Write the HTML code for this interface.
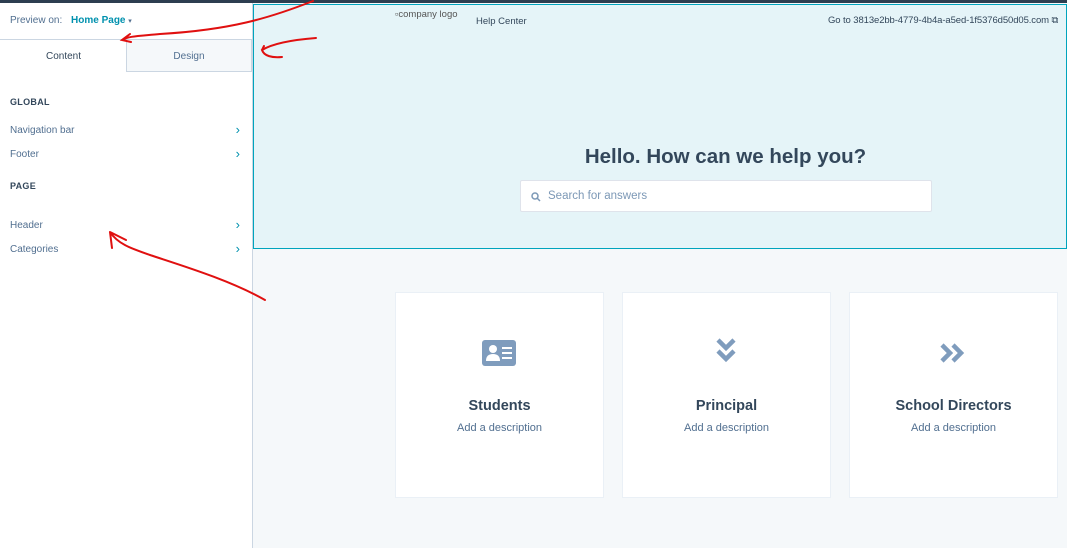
<!DOCTYPE html>
<html><head><meta charset="utf-8"><style>
*{margin:0;padding:0;box-sizing:border-box}
body{width:1067px;height:548px;overflow:hidden;font-family:"Liberation Sans",sans-serif;background:#f5f8fa;position:relative}
.topbar{position:absolute;left:0;top:0;width:1067px;height:3px;background:#2d3e50}
.left{position:absolute;left:0;top:3px;width:253px;height:545px;background:#fff;border-right:1px solid #cbd6e2}
.pv{position:absolute;left:10px;top:12px;font-size:10px;color:#516f90}
.pv b{color:#0091ae;margin-left:6px}
.tab{position:absolute;top:36px;height:33px;font-size:10px;text-align:center;line-height:33px}
.t1{left:0;width:127px;color:#33475b;border-top:1px solid #cbd6e2;background:#fff}
.t2{left:126px;width:126px;background:#f5f8fa;color:#516f90;border:1px solid #cbd6e2}
.h{position:absolute;left:10px;font-size:9px;font-weight:bold;color:#33475b;letter-spacing:.3px}
.it{position:absolute;left:10px;width:230px;font-size:10px;color:#516f90}
.it span{position:absolute;right:0;top:-3px;color:#0091ae;font-size:13px}
.hdr{position:absolute;left:253px;top:4px;width:814px;height:245px;background:#e5f4f8;border:1px solid #00a4bd}
.title{position:absolute;top:145px;text-align:center;font-size:20.5px;font-weight:bold;color:#33475b;width:945px;left:253px}
.search{position:absolute;left:520px;top:180px;width:412px;height:32px;background:#fff;border:1px solid #dfe3eb;border-radius:2px;font-size:11.5px;color:#7c98b6;line-height:30px;padding-left:27px}
.card{position:absolute;top:292px;width:209px;height:206px;background:#fff;border:1px solid #eaf0f6;text-align:center}
.card h3{position:absolute;top:105px;width:100%;font-size:14.5px;color:#33475b}
.card p{position:absolute;top:129px;width:100%;font-size:11px;color:#516f90}
.card svg{position:absolute;left:85px;top:45px}
</style></head><body>
<div class="topbar"></div>
<div class="left">
<div class="pv">Preview on: <b>Home Page</b> <span style="font-size:7px">▾</span></div>
<div class="tab t1"><span style="color:#33475b">Content</span></div>
<div class="tab t2">Design</div>
<div class="h" style="top:94px">GLOBAL</div>
<div class="it" style="top:122px">Navigation bar<span>›</span></div>
<div class="it" style="top:146px">Footer<span>›</span></div>
<div class="h" style="top:178px">PAGE</div>
<div class="it" style="top:217px">Header<span>›</span></div>
<div class="it" style="top:241px">Categories<span>›</span></div>
</div>
<div class="hdr"></div>
<div style="position:absolute;left:395px;top:9px;font-size:9.5px;color:#555">▫company logo</div>
<div style="position:absolute;left:476px;top:16px;font-size:9.5px;color:#33475b">Help Center</div>
<div style="position:absolute;left:828px;top:15px;font-size:9.5px;color:#33475b;letter-spacing:-.1px">Go to 3813e2bb-4779-4b4a-a5ed-1f5376d50d05.com ⧉</div>
<div class="title">Hello. How can we help you?</div>
<div class="search"><svg style="position:absolute;left:10px;top:11px" width="10" height="10" viewBox="0 0 10 10"><circle cx="4" cy="4" r="3" fill="none" stroke="#7c98b6" stroke-width="1.5"/><path d="M6 6L9 9" stroke="#7c98b6" stroke-width="1.5"/></svg>Search for answers</div>
<div class="card" style="left:395px"><svg width="36" height="30" viewBox="0 0 36 30"><rect x="1" y="2" width="34" height="26" rx="3" fill="#7f9cbd"/><circle cx="12" cy="11" r="4" fill="#fff"/><path d="M5 23q0-7 7-7t7 7z" fill="#fff"/><rect x="21" y="9" width="10" height="2" fill="#fff"/><rect x="21" y="14" width="10" height="2" fill="#fff"/><rect x="21" y="19" width="10" height="2" fill="#fff"/></svg><h3>Students</h3><p>Add a description</p></div>
<div class="card" style="left:622px"><svg width="36" height="30" viewBox="0 0 36 30"><path d="M10 2l8 8 8-8M10 13l8 8 8-8" fill="none" stroke="#7f9cbd" stroke-width="4.5"/></svg><h3>Principal</h3><p>Add a description</p></div>
<div class="card" style="left:849px"><svg width="36" height="30" viewBox="0 0 36 30"><path d="M7 7l8 8-8 8M18 7l8 8-8 8" fill="none" stroke="#7f9cbd" stroke-width="4.5"/></svg><h3>School Directors</h3><p>Add a description</p></div>
<svg style="position:absolute;left:0;top:0" width="1067" height="548" fill="none" stroke="#e01010" stroke-width="2" stroke-linecap="round">
<path d="M313 1C270 18 230 30 160 34 140 36 128 36 122 40M130 34L122 40 131 42"/>
<path d="M316 38C290 40 272 44 262 50 264 56 272 58 282 57M262 50L264 46"/>
<path d="M265 300C230 280 180 265 150 255 130 248 118 244 110 232M110 232L112 248M110 232L126 240"/>
</svg>
</body></html>
